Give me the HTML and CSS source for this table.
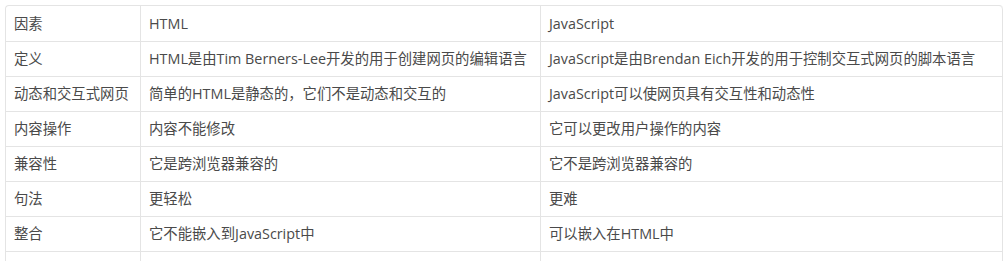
FILE: index.html
```html
<!DOCTYPE html>
<html lang="zh-CN">
<head>
<meta charset="utf-8">
<link rel="stylesheet" href="styles.css">
</head>
<body>
<div class="wrap">
<table class="cmp">
  <colgroup><col class="c1"><col class="c2"><col class="c3"></colgroup>
  <tbody>
    <tr class="first"><td>因素</td><td>HTML</td><td>JavaScript</td></tr>
    <tr><td>定义</td><td>HTML是由Tim Berners-Lee开发的用于创建网页的编辑语言</td><td>JavaScript是由Brendan Eich开发的用于控制交互式网页的脚本语言</td></tr>
    <tr><td>动态和交互式网页</td><td>简单的HTML是静态的，它们不是动态和交互的</td><td>JavaScript可以使网页具有交互性和动态性</td></tr>
    <tr><td>内容操作</td><td>内容不能修改</td><td>它可以更改用户操作的内容</td></tr>
    <tr><td>兼容性</td><td>它是跨浏览器兼容的</td><td>它不是跨浏览器兼容的</td></tr>
    <tr><td>句法</td><td>更轻松</td><td>更难</td></tr>
    <tr><td>整合</td><td>它不能嵌入到JavaScript中</td><td>可以嵌入在HTML中</td></tr>
    <tr><td>框架</td><td>HTML没有任何框架，一般不需要</td><td>JavaScript有很多框架，比如Angular和React</td></tr>
  </tbody>
</table>
</div>
</body>
</html>
```

FILE: styles.css
```css
html, body {
  margin: 0;
  padding: 0;
  background: #ffffff;
}
.wrap {
  padding: 5px 0 0 5px;
  width: 997px;
}
.cmp {
  width: 997px;
  table-layout: fixed;
  border-collapse: separate;
  border-spacing: 0;
  border-top: 1px solid #e4e4e4;
  border-left: 1px solid #e4e4e4;
  border-radius: 4px 4px 0 0;
  font-family: "Open Sans", "Noto Sans CJK SC", sans-serif;
  font-size: 14.35px;
  color: #4a4a4a;
}
.c1 { width: 135px; }
.c2 { width: 400px; }
.c3 { width: 462px; }
.cmp td {
  height: 34px;
  padding: 0 0 0 8px;
  border-right: 1px solid #e4e4e4;
  border-bottom: 1px solid #e4e4e4;
  white-space: nowrap;
  overflow: hidden;
  vertical-align: middle;
  line-height: 20px;
}
.cmp tr.first td { height: 35px; }
.cmp tr.first td:last-child { border-top-right-radius: 4px; }
```
